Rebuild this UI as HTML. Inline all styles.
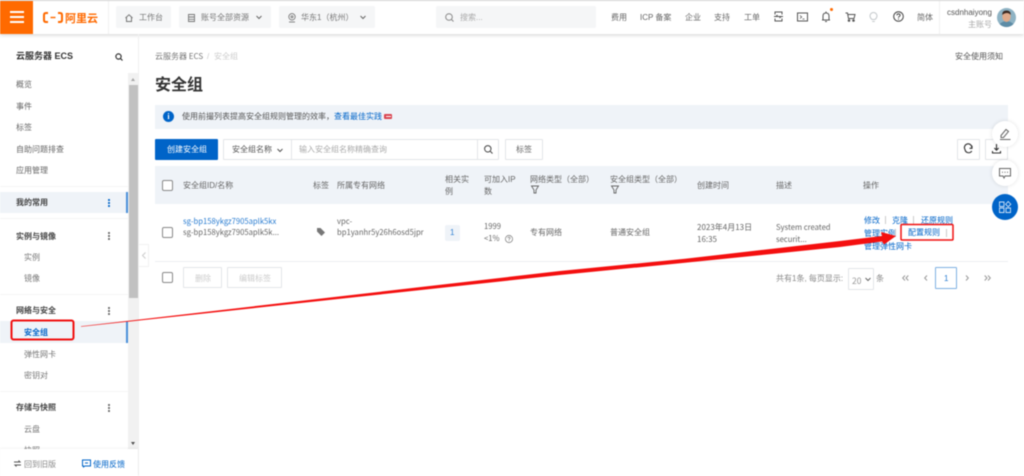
<!DOCTYPE html>
<html lang="zh">
<head>
<meta charset="utf-8">
<title>安全组</title>
<style>
*{box-sizing:border-box;margin:0;padding:0}
html,body{width:1024px;height:476px;overflow:hidden;background:#fff}
body{position:relative;font-family:"Liberation Sans","Noto Sans CJK SC",sans-serif;font-size:8px;color:#666}
#w{position:absolute;left:0;top:0;width:1024px;height:476px;filter:blur(.4px)}
.a{position:absolute}
.t{position:absolute;white-space:nowrap;line-height:12px;height:12px;margin-top:1px}
.n{font-family:"Noto Sans CJK SC",sans-serif;font-size:7.65px}
.g{background:#f5f6f7;border-radius:2px;top:6px;height:22px}
.b{font-weight:700;color:#444}
.sub{color:#777}
.l{color:#0064c8}
.bx{position:absolute;border:1px solid #e3e5e8;background:#fff;border-radius:1px}
.cb{position:absolute;width:11px;height:11px;border:1px solid #8a8a8a;border-radius:2px;background:#fff}
.dots{position:absolute;width:2px;height:8px;background:radial-gradient(circle at 1px 1px,#666 1px,transparent 1.1px) 0 0/2px 3px}
svg{position:absolute;overflow:visible}
</style>
</head>
<body>
<div id="w">
<!-- top bar -->
<div class="a" style="left:0;top:0;width:1024px;height:1px;background:#dcdcdc"></div>
<div class="a" style="left:0;top:1px;width:1024px;height:33px;background:#fff;box-shadow:0 1px 4px rgba(0,0,0,.18)"></div>
<div class="a" style="left:0;top:1px;width:33px;height:33px;background:#ff6a00"></div>
<div class="a" style="left:10px;top:11px;width:14px;height:1.5px;background:#fff"></div>
<div class="a" style="left:10px;top:16px;width:14px;height:1.5px;background:#fff"></div>
<div class="a" style="left:10px;top:21px;width:14px;height:1.5px;background:#fff"></div>
<svg style="left:43px;top:12px" width="20" height="12" viewBox="0 0 20 12" fill="none" stroke="#ff6a00" stroke-width="2"><path d="M5 1H3Q1 1 1 3V8Q1 10 3 10H5"/><path d="M15 1H17Q19 1 19 3V8Q19 10 17 10H15"/><path d="M7.500 5.500H12.500" stroke-width="1.400"/></svg>
<div class="t" style="left:65px;top:11px;font-size:11px;height:14px;line-height:14px;font-weight:700;color:#ff6a00">阿里云</div>
<div class="a" style="left:108px;top:1px;width:1px;height:33px;background:#f2f2f2"></div>
<div class="a g" style="left:116px;width:55px"></div>
<div class="a g" style="left:179px;width:92px"></div>
<div class="a g" style="left:279px;width:96px"></div>
<div class="a g" style="left:436px;width:160px"></div>
<svg style="left:125px;top:14px" width="8" height="8" viewBox="0 0 8 8" fill="none" stroke="#777"><path d="M.5 4L4 .8 7.500 4M1.500 3.400V7.500H6.500V3.400"/></svg>
<div class="t" style="left:139px;top:11px;color:#777">工作台</div>
<svg style="left:188px;top:14px" width="7" height="8" viewBox="0 0 7 8" fill="none" stroke="#777" stroke-width=".9"><path d="M.5.5H6.500V7.500H.5ZM.5 3H6.500M.5 5.300H6.500"/></svg>
<div class="t" style="left:201px;top:11px;color:#777">账号全部资源</div>
<svg style="left:256px;top:15px" width="6" height="5" fill="none" stroke="#666"><path d="M.5 1L3 3.500 5.500 1"/></svg>
<svg style="left:288px;top:13px" width="8" height="10" viewBox="0 0 8 10" fill="none" stroke="#777" stroke-width=".9"><circle cx="4" cy="3.800" r="3.200"/><circle cx="4" cy="3.800" r="1"/><path d="M1 9H7"/></svg>
<div class="t" style="left:301px;top:11px;color:#777">华东1（杭州）</div>
<svg style="left:360px;top:15px" width="6" height="5" fill="none" stroke="#666"><path d="M.5 1L3 3.500 5.500 1"/></svg>
<svg style="left:445px;top:13px" width="9" height="9" viewBox="0 0 9 9" fill="none" stroke="#888"><circle cx="4" cy="4" r="3.300"/><path d="M6.500 6.500L8.500 8.500"/></svg>
<div class="t" style="left:460px;top:11px;color:#aaa">搜索...</div>
<div class="t" style="left:611px;top:11px">费用</div>
<div class="t" style="left:640px;top:11px">ICP 备案</div>
<div class="t" style="left:685px;top:11px">企业</div>
<div class="t" style="left:714px;top:11px">支持</div>
<div class="t" style="left:744px;top:11px">工单</div>
<svg style="left:773px;top:11px" width="11" height="11" viewBox="0 0 11 11" fill="none" stroke="#555"><path d="M2 3.500V1H9V3.500M2 7.500V10H9V7.500M1 5.500H10M4.500 4L3 5.500M6.500 7L8 5.500"/></svg>
<svg style="left:797px;top:12px" width="11" height="10" viewBox="0 0 11 10" fill="none" stroke="#555"><path d="M.5 1H10.500V9H.5Z"/><path d="M3 3.500L4.700 5 3 6.500M5.500 7H7.500" stroke-width=".8"/></svg>
<svg style="left:821px;top:11px" width="10" height="12" viewBox="0 0 10 12" fill="none" stroke="#555"><path d="M1 9H9M2 9V5Q2 2 5 2T8 5V9M4 10.500H6M5 .5V2"/></svg>
<div class="a" style="left:830px;top:8px;width:3px;height:3px;border-radius:50%;background:#ff6a00"></div>
<svg style="left:845px;top:12px" width="11" height="10" viewBox="0 0 11 10" fill="none" stroke="#555"><path d="M.5 1H2.500L3.500 6.500H9L10 2.500H3"/><circle cx="4" cy="8.500" r=".8" fill="#555"/><circle cx="8.500" cy="8.500" r=".8" fill="#555"/></svg>
<svg style="left:869px;top:11px" width="9" height="12" viewBox="0 0 9 12" fill="none" stroke="#c5c9cc"><path d="M3 8.500C1.800 7.500 1 6.500 1 5A3.500 3.500 0 018 5C8 6.500 7.200 7.500 6 8.500ZM3.200 10.500H5.800"/></svg>
<svg style="left:893px;top:11px" width="11" height="11" viewBox="0 0 11 11" fill="none" stroke="#444"><circle cx="5.500" cy="5.500" r="4.800"/><path d="M3.900 4.300Q4 2.900 5.500 2.900T7.100 4.200Q7.100 5 6.200 5.500 5.500 5.900 5.500 6.700"/><path d="M5.500 7.600V8.600"/></svg>
<div class="t" style="left:917px;top:11px">简体</div>
<div class="a" style="left:939px;top:1px;width:1px;height:33px;background:#f2f2f2"></div>
<div class="t" style="left:947px;top:6px;color:#555;font-size:8px">csdnhaiyong</div>
<div class="t" style="left:968px;top:18px;color:#aaa">主账号</div>
<svg style="left:997px;top:8px" width="19" height="19" viewBox="0 0 19 19"><circle cx="9.500" cy="9.500" r="9.500" fill="#8fb3c4"/><path d="M2.500 16Q9.500 10 16.500 16A9.500 9.500 0 012.500 16Z" fill="#5d8ca6"/><ellipse cx="9.500" cy="8.500" rx="4.200" ry="5.500" fill="#e0ab8b"/><path d="M5.200 7Q5 2.500 9.500 2.500T13.800 7Q12 4.800 9.500 5T5.200 7Z" fill="#3b2a22"/></svg>

<!-- sidebar -->
<div class="a" style="left:138px;top:34px;width:1px;height:442px;background:#f0f0f0"></div>
<div class="t b" style="left:16px;top:49px;font-size:9px;color:#333">云服务器 ECS</div>
<svg style="left:115px;top:53px" width="8" height="8" viewBox="0 0 8 8" fill="none" stroke="#333" stroke-width="1.200"><circle cx="3.500" cy="3.500" r="2.600"/><path d="M5.500 5.500L7.500 7.500"/></svg>
<div class="t" style="left:16px;top:78px">概览</div>
<div class="t" style="left:16px;top:100px">事件</div>
<div class="t" style="left:16px;top:121px">标签</div>
<div class="t" style="left:16px;top:143px">自助问题排查</div>
<div class="t" style="left:16px;top:164px">应用管理</div>
<div class="a" style="left:0;top:186px;width:128px;height:1px;background:#f6f6f6"></div>
<div class="a" style="left:0;top:192px;width:128px;height:21px;background:#eff3f8"></div>
<div class="a" style="left:126px;top:192px;width:1.500px;height:21px;background:#4a90d9"></div>
<div class="t b" style="left:16px;top:196px">我的常用</div>
<div class="dots" style="left:108px;top:199px;background-image:radial-gradient(circle at 1px 1px,#0064c8 1px,transparent 1.100px)"></div>
<div class="a" style="left:0;top:218px;width:128px;height:1px;background:#f6f6f6"></div>
<div class="t b" style="left:16px;top:230px">实例与镜像</div>
<div class="dots" style="left:108px;top:232px"></div>
<div class="t sub" style="left:24px;top:251px">实例</div>
<div class="t sub" style="left:24px;top:272px">镜像</div>
<div class="a" style="left:0;top:294px;width:128px;height:1px;background:#f6f6f6"></div>
<div class="t b" style="left:16px;top:304px">网络与安全</div>
<div class="dots" style="left:108px;top:307px"></div>
<div class="a" style="left:0;top:321px;width:128px;height:22px;background:#eff3f8"></div>
<div class="a" style="left:126px;top:321px;width:1.500px;height:22px;background:#4a90d9"></div>
<div class="t" style="left:24px;top:326px;color:#0064c8;font-weight:700">安全组</div>
<div class="t sub" style="left:24px;top:348px">弹性网卡</div>
<div class="t sub" style="left:24px;top:369px">密钥对</div>
<div class="a" style="left:0;top:391px;width:128px;height:1px;background:#f6f6f6"></div>
<div class="t b" style="left:16px;top:401px">存储与快照</div>
<div class="dots" style="left:108px;top:404px"></div>
<div class="t sub" style="left:24px;top:423px">云盘</div>
<div class="t sub" style="left:24px;top:444px">快照</div>
<!-- scrollbar -->
<div class="a" style="left:128px;top:73px;width:10px;height:376px;background:#f1f1f1"></div>
<div class="a" style="left:128.500px;top:85px;width:9px;height:213px;background:#c1c1c1"></div>
<div class="a" style="left:130.500px;top:78px;width:0;height:0;border:2.500px solid transparent;border-bottom:3px solid #a5a5a5;border-top:0"></div>
<div class="a" style="left:130.500px;top:442px;width:0;height:0;border:2.500px solid transparent;border-top:3px solid #505050;border-bottom:0"></div>
<!-- sidebar footer -->
<div class="a" style="left:0;top:449px;width:138px;height:27px;background:#fff;box-shadow:0 -1px 2px rgba(0,0,0,.05)"></div>
<svg style="left:14px;top:460px" width="7" height="7" viewBox="0 0 7 7" fill="none" stroke="#555"><path d="M0 2H6L4.500 .5M7 5H1L2.500 6.500"/></svg>
<div class="t" style="left:24px;top:458px;color:#888">回到旧版</div>
<svg style="left:82px;top:459px" width="9" height="9" viewBox="0 0 9 9" fill="none" stroke="#0064c8"><path d="M.5 1H8.500V7H3L1.500 8V7H.5ZM3 4H6"/></svg>
<div class="t l" style="left:93px;top:458px">使用反馈</div>
<!-- collapse handle -->
<div class="a" style="left:139px;top:244px;width:10px;height:23px;background:#fff;border:1px solid #f2f2f2;border-left:0"></div>
<svg style="left:142px;top:252px" width="4" height="7" fill="none" stroke="#ccc"><path d="M3.500 .5L.5 3.500 3.500 6.500"/></svg>

<!-- main -->
<div class="t n" style="left:155px;top:50px;color:#777;font-size:8px">云服务器 ECS</div>
<div class="t" style="left:207px;top:50px;color:#ccc">/</div>
<div class="t" style="left:214px;top:50px;color:#ccc">安全组</div>
<div class="t" style="left:955px;top:50px;color:#555">安全使用须知</div>
<div class="t" style="left:155px;top:75px;height:20px;line-height:20px;font-size:16px;font-weight:700;color:#333">安全组</div>
<div class="a" style="left:155px;top:105px;width:853px;height:24px;background:#eff3f8"></div>
<div class="a" style="left:163px;top:111px;width:11px;height:11px;border-radius:50%;background:#0064c8;color:#fff;font-size:8px;font-weight:700;text-align:center;line-height:11px;font-family:'Liberation Serif',serif">i</div>
<div class="t" style="left:182px;top:110px;color:#555">使用前撮列表提高安全组规则管理的效率，</div>
<div class="t l" style="left:334px;top:110px">查看最佳实践</div>
<div class="a" style="left:384px;top:114px;width:8px;height:5px;background:#d9434e;border-radius:1px"></div>
<div class="a" style="left:385.500px;top:116px;width:5px;height:1px;background:#fff"></div>

<!-- toolbar -->
<div class="a" style="left:155px;top:139px;width:63px;height:21px;background:#0064c8;border-radius:1px"></div>
<div class="t" style="left:167px;top:143px;color:#fff">创建安全组</div>
<div class="bx" style="left:223px;top:139px;width:276px;height:21px"></div>
<div class="a" style="left:291px;top:139px;width:1px;height:21px;background:#e3e5e8"></div>
<div class="a" style="left:477px;top:139px;width:1px;height:21px;background:#e3e5e8"></div>
<div class="t" style="left:232px;top:143px;color:#555">安全组名称</div>
<svg style="left:277px;top:148px" width="6" height="5" fill="none" stroke="#555"><path d="M.5 1L3 3.500 5.500 1"/></svg>
<div class="t" style="left:299px;top:143px;color:#aaa">输入安全组名称精确查询</div>
<svg style="left:484px;top:145px" width="9" height="9" viewBox="0 0 9 9" fill="none" stroke="#444"><circle cx="3.800" cy="3.800" r="3.200"/><path d="M6.200 6.200L8.500 8.500"/></svg>
<div class="bx" style="left:505px;top:139px;width:38px;height:21px"></div>
<div class="t" style="left:516px;top:143px;color:#666">标签</div>
<div class="bx" style="left:957px;top:139px;width:23px;height:21px"></div>
<svg style="left:964px;top:145px" width="9" height="9" viewBox="0 0 9 9" fill="none" stroke="#333" stroke-width="1.100"><path d="M7.800 3A3.700 3.700 0 101 4.500 3.700 3.700 0 007.800 6"/><path d="M8 .8V3.300H5.500"/></svg>
<div class="bx" style="left:985px;top:139px;width:23px;height:21px"></div>
<svg style="left:992px;top:144px" width="9" height="10" viewBox="0 0 9 10" fill="none" stroke="#333" stroke-width="1.100"><path d="M4.500 0V6M2.300 4L4.500 6.200 6.700 4M.5 7V9H8.500V7"/></svg>

<!-- table -->
<div class="a" style="left:155px;top:166px;width:853px;height:38px;background:#eff3f8"></div>
<div class="cb" style="left:162px;top:180px"></div>
<div class="t" style="left:183px;top:179px">安全组ID/名称</div>
<div class="t" style="left:313px;top:179px">标签</div>
<div class="t" style="left:337px;top:179px">所属专有网络</div>
<div class="t" style="left:445px;top:173px">相关实</div>
<div class="t" style="left:445px;top:185px">例</div>
<div class="t" style="left:484px;top:173px">可加入IP</div>
<div class="t" style="left:484px;top:185px">数</div>
<div class="t" style="left:530px;top:173px">网络类型（全部）</div>
<svg style="left:531px;top:185px" width="8" height="9" fill="none" stroke="#666" stroke-width=".9"><path d="M.5 1H7.500L5 5V8H3V5Z"/></svg>
<div class="t" style="left:610px;top:173px">安全组类型（全部）</div>
<svg style="left:611px;top:185px" width="8" height="9" fill="none" stroke="#666" stroke-width=".9"><path d="M.5 1H7.500L5 5V8H3V5Z"/></svg>
<div class="t" style="left:697px;top:179px">创建时间</div>
<div class="t" style="left:776px;top:179px">描述</div>
<div class="t" style="left:863px;top:179px">操作</div>

<div class="cb" style="left:162px;top:227px"></div>
<div class="t n l" style="left:183px;top:215px;opacity:.85">sg-bp158ykgz7905aplk5kx</div>
<div class="t n" style="left:183px;top:226px">sg-bp158ykgz7905aplk5k...</div>
<svg style="left:317px;top:228px" width="8" height="8" viewBox="0 0 8 8" fill="#777"><path d="M0 0H3.500L8 4.500 4.500 8 0 3.500Z"/></svg>
<div class="t n" style="left:337px;top:215px">vpc-</div>
<div class="t n" style="left:337px;top:226px">bp1yanhr5y26h6osd5jpr</div>
<div class="a" style="left:445px;top:225px;width:15px;height:16px;background:#eff3f8;border-radius:2px"></div>
<div class="t l" style="left:450px;top:226px;opacity:.8">1</div>
<div class="t n" style="left:484px;top:220px">1999</div>
<div class="t n" style="left:484px;top:232px">&lt;1%</div>
<svg style="left:505px;top:235px" width="8" height="8" viewBox="0 0 8 8" fill="none" stroke="#777" stroke-width=".7"><circle cx="4" cy="4" r="3.600"/><path d="M2.900 3.100Q3 2.100 4 2.100T5.100 3Q5.100 3.600 4.500 3.900 4 4.200 4 4.800M4 5.400V6.100"/></svg>
<div class="t" style="left:530px;top:226px">专有网络</div>
<div class="t" style="left:610px;top:226px">普通安全组</div>
<div class="t n" style="left:697px;top:221px;font-size:8px">2023年4月13日</div>
<div class="t n" style="left:697px;top:233px;font-size:8px">16:35</div>
<div class="t n" style="left:776px;top:221px">System created</div>
<div class="t n" style="left:776px;top:233px">securit...</div>
<div class="t l" style="left:864px;top:214px">修改</div>
<div class="a" style="left:885px;top:216px;width:1px;height:8px;background:#ccc"></div>
<div class="t l" style="left:892px;top:214px">克隆</div>
<div class="a" style="left:913px;top:216px;width:1px;height:8px;background:#ccc"></div>
<div class="t l" style="left:921px;top:214px">还原规则</div>
<div class="t l" style="left:864px;top:227px">管理实例</div>
<div class="a" style="left:895px;top:229px;width:1px;height:8px;background:#ccc"></div>
<div class="t l" style="left:908px;top:226px">配置规则</div>
<div class="a" style="left:946px;top:229px;width:1px;height:8px;background:#ccc"></div>
<div class="t l" style="left:864px;top:240px">管理弹性网卡</div>
<div class="a" style="left:155px;top:261px;width:853px;height:1px;background:#eceef1"></div>

<!-- footer of table -->
<div class="cb" style="left:162px;top:272px"></div>
<div class="bx" style="left:183px;top:267px;width:39px;height:21px"></div>
<div class="t" style="left:195px;top:272px;color:#ccc">删除</div>
<div class="bx" style="left:227px;top:267px;width:55px;height:21px"></div>
<div class="t" style="left:239px;top:272px;color:#ccc">编辑标签</div>
<div class="t" style="left:776px;top:272px;color:#888">共有1条, 每页显示:</div>
<div class="bx" style="left:848px;top:268px;width:26px;height:22px"></div>
<div class="t n" style="left:852px;top:274px;color:#999;font-size:8.500px">20</div>
<svg style="left:865px;top:277px" width="6" height="5" fill="none" stroke="#666"><path d="M.5 1L3 3.500 5.500 1"/></svg>
<div class="t" style="left:876px;top:272px;color:#888">条</div>
<svg style="left:902px;top:275px" width="7" height="6" fill="none" stroke="#999"><path d="M3 .5L.7 3 3 5.500M6.300 .5L4 3 6.300 5.500"/></svg>
<svg style="left:923.500px;top:275px" width="4" height="6" fill="none" stroke="#999"><path d="M3 .5L.7 3 3 5.500"/></svg>
<div class="a" style="left:935px;top:267px;width:22px;height:22px;border:1px solid #7fb0e2;border-radius:1px"></div>
<div class="t l" style="left:944px;top:272px;opacity:.85">1</div>
<svg style="left:964.500px;top:275px" width="4" height="6" fill="none" stroke="#999"><path d="M1 .5L3.300 3 1 5.500"/></svg>
<svg style="left:984px;top:275px" width="7" height="6" fill="none" stroke="#999"><path d="M.7 .5L3 3 .7 5.500M4 .5L6.300 3 4 5.500"/></svg>

<!-- floating buttons -->
<div class="a" style="left:992px;top:121px;width:26px;height:26px;border-radius:50%;background:#fff;box-shadow:0 0 4px rgba(0,0,0,.12)"></div>
<svg style="left:999px;top:128px" width="12" height="12" viewBox="0 0 12 12" fill="none" stroke="#666"><path d="M2 7.500L7 1.500 9.500 3.500 4.500 9.500H2ZM1 11.500H11.500"/></svg>
<div class="a" style="left:992px;top:160px;width:26px;height:26px;border-radius:50%;background:#fff;box-shadow:0 0 4px rgba(0,0,0,.12)"></div>
<svg style="left:999px;top:168px" width="12" height="11" viewBox="0 0 12 11" fill="none" stroke="#666"><path d="M.5.500H11.500V8H6L5 10 4 8H.5Z"/><path d="M3 4.200H4M5.500 4.200H6.500M8 4.200H9"/></svg>
<div class="a" style="left:992px;top:194px;width:26px;height:26px;border-radius:50%;background:#0064c8"></div>
<svg style="left:999px;top:201px" width="12" height="12" viewBox="0 0 12 12" fill="none" stroke="#cfe2f7" stroke-width=".9"><path d="M.5 1H5V5.500H.5ZM.5 7H5V11.500H.5ZM7 7H11.500V11.500H7ZM9.200 .5L11.800 3.200 9.200 5.800 6.600 3.200Z"/></svg>

<!-- annotations -->
<svg style="left:0;top:0" width="1024" height="476" viewBox="0 0 1024 476">
<rect x="11.500" y="320.500" width="62" height="19" rx="2" fill="none" stroke="#f01010" stroke-width="2"/>
<path d="M81 326.200L560 271 685 258.800 840 241 882 236 881 232 896 236 884 244.500 882 241.500 840 247 685 262.800 560 275 81 326.800Z" fill="#f40f0f"/>
<rect x="901" y="224.500" width="52" height="15.500" rx="1" fill="none" stroke="#f01010" stroke-width="1.500"/>
</svg>
</div>
</body>
</html>
